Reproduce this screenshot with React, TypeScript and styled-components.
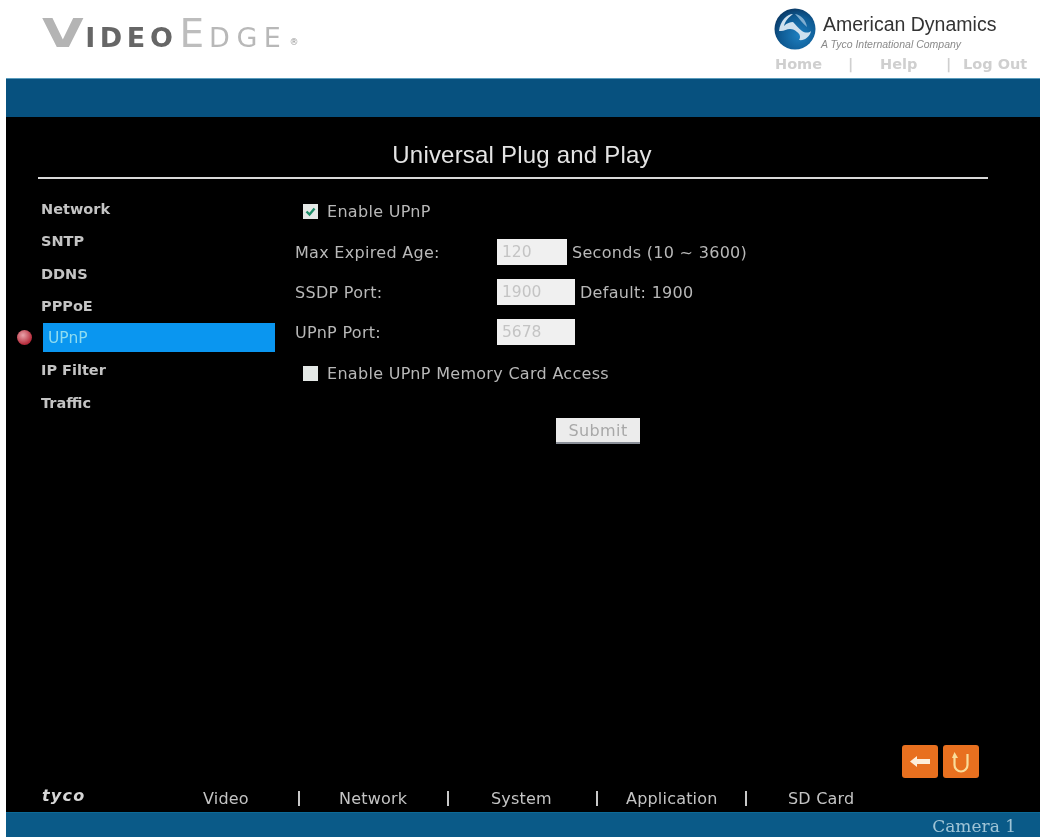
import styled, { createGlobalStyle } from 'styled-components'

const sideItems = ['Network', 'SNTP', 'DDNS', 'PPPoE', 'UPnP', 'IP Filter', 'Traffic']
const activeItem = 'UPnP'

const fields = [
  { label: 'Max Expired Age:', value: '120', width: 70, note: 'Seconds (10 ~ 3600)' },
  { label: 'SSDP Port:', value: '1900', width: 78, note: 'Default: 1900' },
  { label: 'UPnP Port:', value: '5678', width: 78, note: '' },
]

const navItems = [
  { label: 'Video', width: 97, gap: 39 },
  { label: 'Network', width: 110, gap: 42 },
  { label: 'System', width: 107, gap: 28 },
  { label: 'Application', width: 121, gap: 41 },
]

const GlobalStyle = createGlobalStyle`
  html, body {
    margin: 0;
    padding: 0;
    background: #fff;
  }
  #root {
    filter: blur(0.45px);
  }
`

export default function App() {
  return (
    <>
      <GlobalStyle />
      <Page>
        <Header>
          <Logo>
            <Big>V</Big>
            <Small>IDEO</Small>
            <BigLight>E</BigLight>
            <SmallLight>DGE</SmallLight>
            <Reg>®</Reg>
          </Logo>
          <Brand>
            <BrandRow>
              <svg width="44" height="44" viewBox="0 0 44 44">
                <defs>
                  <radialGradient id="globe" cx="0.6" cy="0.65" r="0.7">
                    <stop offset="0" stopColor="#1d7fc0" />
                    <stop offset="0.65" stopColor="#0e5a93" />
                    <stop offset="1" stopColor="#0a3560" />
                  </radialGradient>
                </defs>
                <circle cx="22" cy="22" r="20.5" fill="url(#globe)" />
                <path
                  d="M6 24C7 14 14 7 20 7c-4 3-8 7-9 12 3-3 6-4 9-4 3 3 5 6 9 9 3 2 7 2 9 0-1 6-7 10-12 9 2-3 1-6-2-8-2-2-4-3-7-3-3 0-6 2-9 2z"
                  fill="#cfe0ee"
                />
                <path d="M22 7c6 1 11 6 12 13-4-3-8-9-12-13z" fill="#7fadd0" />
              </svg>
              <BrandText>
                <BrandName>American Dynamics</BrandName>
                <BrandTag>A Tyco International Company</BrandTag>
              </BrandText>
            </BrandRow>
            <TopLinks>
              <TopLink $width={73}>Home</TopLink>
              <TopLink $width={32}>|</TopLink>
              <TopLink $width={66}>Help</TopLink>
              <TopLink $width={17}>|</TopLink>
              <TopLink>Log Out</TopLink>
            </TopLinks>
          </Brand>
        </Header>

        <Band />

        <Main>
          <Title>Universal Plug and Play</Title>
          <Rule />
          <Content>
            <Sidebar>
              {sideItems.map((item) => (
                <SideRow key={item}>
                  {item === activeItem && <Dot />}
                  <SideItem $active={item === activeItem}>{item}</SideItem>
                </SideRow>
              ))}
            </Sidebar>
            <Form>
              <CheckRow>
                <Check>
                  <svg width="11" height="11" viewBox="0 0 11 11">
                    <path d="M1.5 5.5l3 3 5-6" fill="none" stroke="#1f8f6a" strokeWidth="2.4" />
                  </svg>
                </Check>
                <FieldText>Enable UPnP</FieldText>
              </CheckRow>
              <Fields>
                {fields.map((field) => (
                  <FieldRow key={field.label}>
                    <FieldLabel>{field.label}</FieldLabel>
                    <Input $width={field.width}>{field.value}</Input>
                    {field.note && <FieldText>{field.note}</FieldText>}
                  </FieldRow>
                ))}
              </Fields>
              <CheckRow>
                <Check />
                <FieldText>Enable UPnP Memory Card Access</FieldText>
              </CheckRow>
              <Submit>Submit</Submit>
            </Form>
          </Content>

          <Actions>
            <ActionButton>
              <svg width="22" height="13" viewBox="0 0 22 13">
                <path d="M1 6.5L8 1v3h13v5H8v3z" fill="#fdeeda" />
              </svg>
            </ActionButton>
            <ActionButton>
              <svg width="20" height="22" viewBox="0 0 20 22">
                <path
                  d="M5 6v8a6.5 6.5 0 0 0 13 0V3"
                  fill="none"
                  stroke="#f9dc9a"
                  strokeWidth="2.2"
                  transform="translate(-1.5 0)"
                />
                <path d="M1 7l2.5-6L7 7z" fill="#f9dc9a" />
              </svg>
            </ActionButton>
          </Actions>

          <Nav>
            <Tyco>tyco</Tyco>
            {navItems.map((item) => (
              <NavCell key={item.label} $width={item.width} $gap={item.gap}>
                <NavText>{item.label}</NavText>
                <Pipe />
              </NavCell>
            ))}
            <NavText>SD Card</NavText>
          </Nav>
        </Main>

        <Status>Camera 1</Status>
      </Page>
    </>
  )
}

const Page = styled.div`
  width: 1040px;
  height: 837px;
  display: flex;
  flex-direction: column;
  overflow: hidden;
  background: #fff;
`

const Header = styled.header`
  height: 78px;
  flex-shrink: 0;
  display: flex;
  justify-content: space-between;
  padding-left: 42px;
`

const Logo = styled.div`
  display: flex;
  align-items: baseline;
  height: 50px;
  padding-top: 16px;
  font-family: 'DejaVu Sans', sans-serif;
  line-height: 36px;
`

const Big = styled.span`
  display: inline-block;
  font-size: 39px;
  font-weight: 700;
  color: #b4b4b4;
  margin-right: 13px;
  transform: scaleX(1.38);
  transform-origin: left;
`

const Small = styled.span`
  font-size: 27px;
  font-weight: 700;
  color: #666;
  letter-spacing: 4.6px;
`

const BigLight = styled.span`
  font-size: 39px;
  font-weight: 400;
  color: #bdbdbd;
  margin: 0 5px 0 2px;
`

const SmallLight = styled.span`
  font-size: 27px;
  color: #b8b8b8;
  letter-spacing: 6.5px;
`

const Reg = styled.span`
  font-size: 9px;
  color: #999;
  align-self: flex-start;
  margin: 8px 0 0 2px;
`

const Brand = styled.div`
  width: 267px;
  display: flex;
  flex-direction: column;
  padding-top: 7px;
`

const BrandRow = styled.div`
  display: flex;
  gap: 4px;
  margin-bottom: 5px;
`

const BrandText = styled.div`
  display: flex;
  flex-direction: column;
  padding-top: 6px;
`

const BrandName = styled.div`
  font-family: 'Liberation Sans', Arial, sans-serif;
  font-size: 19.5px;
  line-height: 22px;
  padding-left: 2px;
  color: #333;
  white-space: nowrap;
`

const BrandTag = styled.div`
  font-family: 'Liberation Sans', Arial, sans-serif;
  font-size: 10.5px;
  font-style: italic;
  line-height: 12px;
  margin-top: 3px;
  color: #8a8a8a;
  white-space: nowrap;
`

const TopLinks = styled.div`
  display: flex;
  padding-left: 2px;
`

const TopLink = styled.span<{ $width?: number }>`
  width: ${(p) => (p.$width ? `${p.$width}px` : 'auto')};
  font-family: 'DejaVu Sans', sans-serif;
  font-size: 14.5px;
  font-weight: 700;
  line-height: 16px;
  color: #cfcfcf;
  white-space: nowrap;
`

const Band = styled.div`
  height: 39px;
  flex-shrink: 0;
  margin-left: 6px;
  background: #07517f;
  border-top: 1px solid #5a9cbc;
  box-sizing: border-box;
`

const Main = styled.main`
  flex: 1;
  margin-left: 6px;
  display: flex;
  flex-direction: column;
  background: #000;
  font-family: 'DejaVu Sans', sans-serif;
  min-height: 0;
`

const Title = styled.h1`
  margin: 26px 0 0;
  width: 1032px;
  text-align: center;
  font-family: 'Liberation Sans', Arial, sans-serif;
  font-size: 24px;
  font-weight: 400;
  letter-spacing: 0.2px;
  line-height: 24px;
  color: #e4e4e4;
`

const Rule = styled.hr`
  width: 950px;
  height: 2px;
  margin: 10px 0 0 32px;
  border: 0;
  background: #d8d8d8;
`

const Content = styled.div`
  display: flex;
  padding-top: 15px;
`

const Sidebar = styled.nav`
  width: 289px;
  flex-shrink: 0;
  display: flex;
  flex-direction: column;
  gap: 2.3px;
  padding-left: 37px;
  box-sizing: border-box;
`

const SideRow = styled.div`
  position: relative;
  height: 30px;
`

const Dot = styled.span`
  position: absolute;
  left: -26px;
  top: 7px;
  width: 15px;
  height: 15px;
  border-radius: 50%;
  background: radial-gradient(circle at 40% 35%, #e9a3aa, #b52a3a 70%);
`

const SideItem = styled.div<{ $active: boolean }>`
  width: 232px;
  height: ${(p) => (p.$active ? '29px' : '30px')};
  box-sizing: border-box;
  padding-left: 5px;
  margin-left: ${(p) => (p.$active ? '0' : '-7px')};
  font-family: 'DejaVu Sans', sans-serif;
  font-size: ${(p) => (p.$active ? '15.5px' : '14.5px')};
  font-weight: ${(p) => (p.$active ? 400 : 700)};
  line-height: 30px;
  color: ${(p) => (p.$active ? '#8fdcf0' : '#c4c4c4')};
  background: ${(p) => (p.$active ? '#0a96f0' : 'transparent')};
`

const Form = styled.div`
  display: flex;
  flex-direction: column;
  padding-top: 7px;
`

const CheckRow = styled.div`
  display: flex;
  align-items: center;
  gap: 9px;
  height: 20px;
  padding-left: 8px;
`

const Check = styled.span`
  width: 15px;
  height: 15px;
  display: flex;
  align-items: center;
  justify-content: center;
  background: #e4e8e6;
`

const FieldText = styled.span`
  font-size: 16px;
  letter-spacing: 0.3px;
  color: #b8b8b8;
  white-space: nowrap;
`

const Fields = styled.div`
  display: flex;
  flex-direction: column;
  gap: 14px;
  margin: 18px 0 18px;
`

const FieldRow = styled.div`
  display: flex;
  align-items: center;
  gap: 5px;
`

const FieldLabel = styled(FieldText)`
  width: 197px;
`

const Input = styled.div<{ $width: number }>`
  width: ${(p) => p.$width}px;
  height: 26px;
  box-sizing: border-box;
  padding-left: 5px;
  background: #f0f0f0;
  font-size: 15.5px;
  line-height: 26px;
  color: #c4c4c4;
`

const Submit = styled.div`
  width: 84px;
  height: 26px;
  margin: 35px 0 0 261px;
  background: #ececec;
  border-bottom: 2px solid #8a8f98;
  box-sizing: border-box;
  text-align: center;
  font-size: 16px;
  letter-spacing: 0.4px;
  line-height: 25px;
  color: #a8a8a8;
`

const Actions = styled.div`
  display: flex;
  gap: 5px;
  margin-top: auto;
  padding-left: 896px;
`

const ActionButton = styled.div`
  width: 36px;
  height: 33px;
  display: flex;
  align-items: center;
  justify-content: center;
  border-radius: 3px;
  background: #e8701f;
`

const Nav = styled.div`
  display: flex;
  align-items: center;
  height: 34px;
  padding: 6px 0 0 36px;
  box-sizing: border-box;
`

const Tyco = styled.span`
  width: 161px;
  margin-top: -5px;
  font-family: 'DejaVu Sans', sans-serif;
  font-size: 16px;
  font-weight: 700;
  font-style: italic;
  letter-spacing: 1.2px;
  color: #d6d6d6;
`

const NavCell = styled.div<{ $width: number; $gap: number }>`
  display: flex;
  align-items: center;
  width: ${(p) => p.$width}px;
  margin-right: ${(p) => p.$gap}px;
`

const NavText = styled.span`
  font-family: 'DejaVu Sans', sans-serif;
  font-size: 16px;
  letter-spacing: 0.2px;
  color: #c4c4c4;
  white-space: nowrap;
`

const Pipe = styled.span`
  width: 2px;
  height: 15px;
  margin-left: auto;
  background: #c8c8c8;
`

const Status = styled.footer`
  height: 25px;
  flex-shrink: 0;
  margin-left: 6px;
  padding-right: 24px;
  background: #0a5a88;
  border-top: 1px solid #0c6a97;
  box-sizing: border-box;
  text-align: right;
  font-family: 'DejaVu Serif', serif;
  font-size: 17px;
  line-height: 27px;
  color: #9fc4d6;
`
